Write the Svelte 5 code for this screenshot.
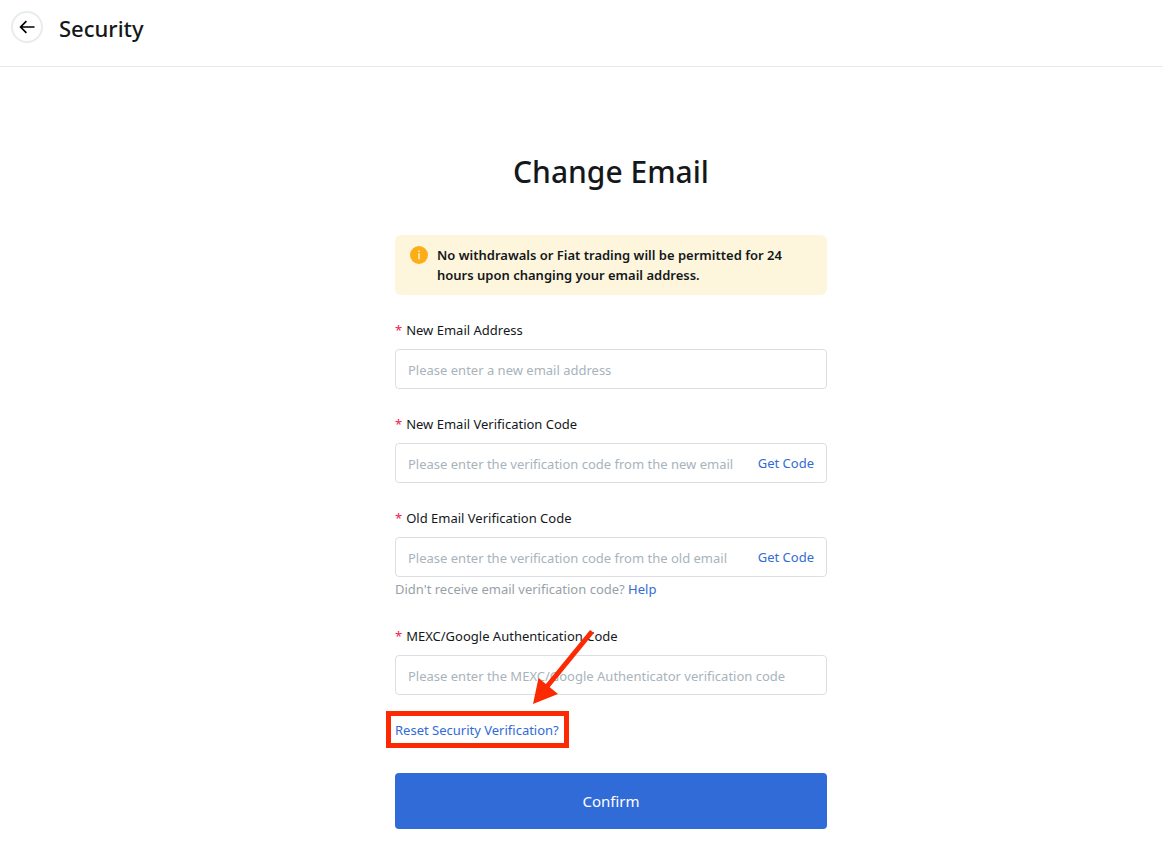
<script lang="ts">
	interface Field {
		id: string;
		label: string;
		placeholder: string;
		hasCode?: boolean;
		hasHelp?: boolean;
	}

	const fields: Field[] = [
		{ id: 'new-email', label: 'New Email Address', placeholder: 'Please enter a new email address' },
		{
			id: 'new-code',
			label: 'New Email Verification Code',
			placeholder: 'Please enter the verification code from the new email',
			hasCode: true
		},
		{
			id: 'old-code',
			label: 'Old Email Verification Code',
			placeholder: 'Please enter the verification code from the old email',
			hasCode: true,
			hasHelp: true
		},
		{
			id: 'auth-code',
			label: 'MEXC/Google Authentication Code',
			placeholder: 'Please enter the MEXC/Google Authenticator verification code'
		}
	];

	let values = $state<Record<string, string>>({
		'new-email': '',
		'new-code': '',
		'old-code': '',
		'auth-code': ''
	});

	function handleSubmit(event: SubmitEvent) {
		event.preventDefault();
	}
</script>

<header class="topbar">
	<button class="back" type="button" aria-label="Back">
		<svg width="16" height="16" viewBox="0 0 16 16" fill="none" stroke="currentColor" stroke-width="1.7">
			<path d="M15.5 8H1.8M7.4 2.2L1.6 8l5.8 5.8" />
		</svg>
	</button>
	<span class="section">Security</span>
</header>

<main class="content">
	<form class="form" onsubmit={handleSubmit}>
		<h1>Change Email</h1>

		<div class="notice" role="note">
			<svg width="18" height="18" viewBox="0 0 18 18">
				<circle cx="9" cy="9" r="9" fill="#fdae17" />
				<path d="M8 4.5h2v1.6H8zM8 7.3h2v6H8z" fill="#fde3a4" />
			</svg>
			<p>No withdrawals or Fiat trading will be permitted for 24 hours upon changing your email address.</p>
		</div>

		{#each fields as field (field.id)}
			<div class="field">
				<label for={field.id}><span class="star">*</span>{field.label}</label>
				<div class="box">
					<input id={field.id} type="text" placeholder={field.placeholder} bind:value={values[field.id]} />
					{#if field.hasCode}
						<button class="get-code" type="button">Get Code</button>
					{/if}
				</div>
				{#if field.hasHelp}
					<p class="help">Didn't receive email verification code? <a href="#help">Help</a></p>
				{/if}
			</div>
		{/each}

		<div class="reset">
			<a href="#reset">Reset Security Verification?</a>
			<span class="frame"></span>
			<svg class="arrow" width="64" height="76" viewBox="0 0 64 76" fill="#fc2a03">
				<path d="M60 2.5L13 60" stroke="#fc2a03" stroke-width="5" />
				<path d="M1 75L6.5 49L26 65z" />
			</svg>
		</div>

		<button class="confirm" type="submit">Confirm</button>
	</form>
</main>

<style>
	:global(body) {
		margin: 0;
		background: #fff;
		color: #14181b;
		font-family: 'Noto Sans', 'Open Sans', sans-serif;
		font-size: 13px;
	}

	.topbar {
		display: flex;
		align-items: center;
		gap: 16px;
		box-sizing: border-box;
		height: 67px;
		padding: 0 11px 12px;
		border-bottom: 1px solid #e6e8ea;
	}

	.back {
		display: flex;
		align-items: center;
		justify-content: center;
		width: 32px;
		height: 32px;
		padding: 0;
		background: none;
		border: 2px solid #e8ecec;
		border-radius: 50%;
		color: #000;
		cursor: pointer;
	}

	.section {
		padding-top: 2px;
		font-size: 22px;
		font-weight: 500;
		line-height: 32px;
	}

	.content {
		display: flex;
		justify-content: center;
		padding: 81px 0 24px 59px;
	}

	.form {
		width: 100%;
		max-width: 432px;
	}

	h1 {
		margin: 0 0 39px;
		font-size: 30px;
		font-weight: 500;
		line-height: 48px;
		text-align: center;
	}

	.notice {
		display: flex;
		gap: 9px;
		margin-bottom: 24px;
		padding: 10px 32px 10px 15px;
		background: #fdf6dd;
		border-radius: 6px;
	}

	.notice svg {
		flex-shrink: 0;
		margin-top: 1px;
	}

	.notice p {
		margin: 0;
		font-weight: 600;
		line-height: 20px;
	}

	.field {
		margin-bottom: 24px;
	}

	label {
		display: block;
		margin-bottom: 8px;
		line-height: 22px;
	}

	.star {
		margin-right: 4px;
		color: #f0204f;
	}

	.box {
		display: flex;
		align-items: center;
		box-sizing: border-box;
		height: 40px;
		padding: 0 12px;
		border: 1px solid #dcdfe2;
		border-radius: 4px;
	}

	input {
		flex: 1;
		min-width: 0;
		padding: 2px 0 0;
		background: none;
		border: none;
		outline: none;
		color: inherit;
		font: inherit;
		line-height: 22px;
	}

	input::placeholder {
		color: #a9b3bc;
		opacity: 1;
	}

	.box:focus-within {
		border-color: #316bd7;
	}

	.get-code {
		padding: 0;
		background: none;
		border: none;
		color: #316bd7;
		font: inherit;
		line-height: 22px;
		cursor: pointer;
	}

	.help {
		margin: 0;
		color: #98a1a9;
		line-height: 24px;
	}

	a {
		color: #316bd7;
		text-decoration: none;
	}

	.reset {
		position: relative;
		width: fit-content;
		margin-bottom: 32px;
		line-height: 22px;
	}

	.frame {
		position: absolute;
		inset: -8px -10px -7px -9px;
		border: 5px solid #fc2a03;
		pointer-events: none;
	}

	.arrow {
		position: absolute;
		right: -37px;
		bottom: 36px;
		pointer-events: none;
	}

	.confirm {
		width: 100%;
		height: 56px;
		background: #316bd7;
		border: none;
		border-radius: 4px;
		color: #fff;
		font: inherit;
		font-size: 15px;
		cursor: pointer;
	}
</style>
